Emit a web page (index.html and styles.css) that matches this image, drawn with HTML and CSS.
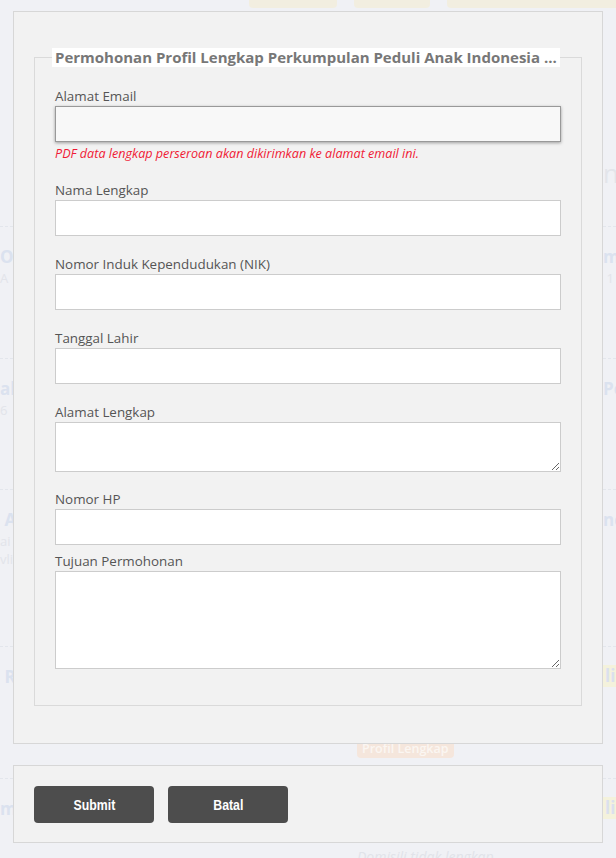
FILE: index.html
```html
<!DOCTYPE html>
<html lang="id">
<head>
<meta charset="utf-8">
<title>Permohonan Profil Lengkap</title>
<link rel="stylesheet" href="styles.css">
</head>
<body>
<div class="bg">
  <div class="tabs">
    <span class="tab tab-a"></span>
    <span class="tab tab-b"></span>
    <span class="tab tab-c"></span>
  </div>
  <div class="bg-head"><span class="bg-head-r">ne</span></div>
  <div class="bg-row r1">
    <div class="c-left"><div class="t">Organisasi</div><div class="s">A</div></div>
    <div class="c-mid"></div>
    <div class="c-right"><div class="t">m</div><div class="s">&nbsp;1</div></div>
  </div>
  <div class="bg-row r2">
    <div class="c-left"><div class="t">ali</div><div class="s">6</div></div>
    <div class="c-mid"></div>
    <div class="c-right"><div class="t">Pe</div></div>
  </div>
  <div class="bg-row r3">
    <div class="c-left"><div class="t">&nbsp;A</div><div class="s">ai 2</div><div class="s">vli</div></div>
    <div class="c-mid"></div>
    <div class="c-right"><div class="t">nc</div></div>
  </div>
  <div class="bg-row r4">
    <div class="c-left"><div class="t">&nbsp;R</div></div>
    <div class="c-mid"><span class="badge">Profil Lengkap</span></div>
    <div class="c-right"><span class="ybtn">li</span></div>
  </div>
  <div class="bg-row r5">
    <div class="c-left"><div class="t">mp</div></div>
    <div class="c-mid"><span class="note">Domisili tidak lengkap</span></div>
    <div class="c-right"><span class="ybtn">li</span></div>
  </div>
</div>

<div class="modal">
  <div class="panel panel-form">
    <fieldset class="fs">
      <legend class="legend">Permohonan Profil Lengkap Perkumpulan Peduli Anak Indonesia ...</legend>
      <div class="group">
        <label class="label">Alamat Email</label>
        <input class="field field-focus" type="text">
        <div class="hint">PDF data lengkap perseroan akan dikirimkan ke alamat email ini.</div>
      </div>
      <div class="group">
        <label class="label">Nama Lengkap</label>
        <input class="field" type="text">
      </div>
      <div class="group">
        <label class="label">Nomor Induk Kependudukan (NIK)</label>
        <input class="field" type="text">
      </div>
      <div class="group">
        <label class="label">Tanggal Lahir</label>
        <input class="field" type="text">
      </div>
      <div class="group group-area">
        <label class="label">Alamat Lengkap</label>
        <textarea class="field area-s"></textarea>
      </div>
      <div class="group group-tight">
        <label class="label">Nomor HP</label>
        <input class="field" type="text">
      </div>
      <div class="group group-last">
        <label class="label">Tujuan Permohonan</label>
        <textarea class="field area-l"></textarea>
      </div>
    </fieldset>
  </div>
  <div class="panel panel-actions">
    <button class="btn" type="button"><span class="btn-text">Submit</span></button>
    <button class="btn" type="button"><span class="btn-text">Batal</span></button>
  </div>
</div>
</body>
</html>
```

FILE: styles.css
```css
* { box-sizing: border-box; }
html, body { margin: 0; padding: 0; }
body {
  background: #f0f1f5;
  font-family: "Open Sans", "Noto Sans", sans-serif;
  position: relative;
  width: 616px;
  height: 858px;
  overflow: hidden;
}

/* faded background page */
.bg { width: 616px; }
.tabs { display: flex; height: 8px; padding-left: 249px; gap: 17px; }
.tab { display: block; background: #f2eee0; border-radius: 0 0 4px 4px; }
.tab-a { width: 88px; }
.tab-b { width: 76px; }
.tab-c { flex: 1; border-radius: 0 0 0 4px; }
.bg-head { height: 219px; display: flex; justify-content: flex-end; align-items: flex-start; padding-top: 150px; border-bottom: 1px dashed #e3e6ec; }
.bg-head-r { font-size: 26px; color: #e3e5ea; width: 13px; overflow: hidden; line-height: 30px; }
.bg-row { display: flex; border-bottom: 1px dashed #e3e6ec; }
.r1 { height: 132px; }
.r2 { height: 131px; }
.r3 { height: 157px; }
.r4 { height: 132px; }
.r5 { height: 120px; }
.c-left { width: 357px; padding-top: 18px; white-space: nowrap; overflow: hidden; }
.c-mid { width: 246px; padding-top: 89px; }
.c-right { flex: 1; padding-top: 18px; white-space: nowrap; overflow: hidden; }
.t { font-weight: 700; font-size: 17px; line-height: 24px; color: #dbe2ef; }
.s { font-size: 13px; line-height: 18px; color: #e2e4ea; }
.badge { display: inline-block; background: #f5e6dc; color: #fbf6f2; font-size: 12.5px; font-weight: 600; line-height: 18px; padding: 0 5px; border-radius: 4px; margin-top: -2px; }
.note { font-style: italic; font-size: 14px; color: #e1e3e9; line-height: 18px; }
.r5 .c-mid { padding-top: 66px; }
.ybtn { display: inline-block; background: #f4f2dc; color: #dbe0ee; font-weight: 700; font-size: 17px; line-height: 22px; padding: 0 2px; margin-top: -2px; }

/* modal lying over the page */
.modal {
  position: absolute;
  top: 0; left: 0; right: 0;
  padding: 11px 13px 0;
  display: flex;
  flex-direction: column;
  gap: 21px;
}
.panel {
  background: #f2f2f2;
  border: 1px solid #d7d7d7;
}
.panel-form { padding: 36px 20px 37px; }
.fs {
  margin: 0;
  border: 1px solid #dadada;
  padding: 19px 20px 36px;
  min-width: 0;
}
.legend {
  margin-left: -3px;
  padding: 0 3px;
  background: #ffffff;
  color: #777777;
  font-weight: 700;
  font-size: 15px;
  line-height: 19px;
  white-space: nowrap;
}
.group { display: flex; flex-direction: column; margin-bottom: 18px; }
.group-area { margin-bottom: 17px; }
.group-tight { margin-bottom: 6px; }
.group-last { margin-bottom: 0; }
.label { font-size: 13.4px; line-height: 20px; color: #555555; }
.field {
  display: block;
  width: 100%;
  height: 36px;
  margin: 0;
  border: 1px solid #cccccc;
  background: #ffffff;
  font-family: inherit;
  font-size: 14px;
  padding: 4px 8px;
  outline: none;
}
.field-focus {
  background: #f8f8f8;
  border-color: #999999;
  box-shadow: 0 1px 3px rgba(0,0,0,0.35);
}
.area-s { height: 50px; resize: vertical; }
.area-l { height: 98px; resize: vertical; }
.hint {
  margin-top: 3px;
  font-size: 12.6px;
  line-height: 17px;
  font-style: italic;
  color: #f01a35;
}
.panel-actions {
  padding: 20px 20px 19px;
  display: flex;
  gap: 14px;
}
.btn {
  width: 120px;
  height: 37px;
  border: 0;
  border-radius: 4px;
  background: #4d4d4d;
  color: #ffffff;
  font-family: "Liberation Sans", Arial, sans-serif;
  font-weight: 700;
  font-size: 15px;
  padding: 0;
}
.btn-text { display: inline-block; transform: scaleX(0.82); }
```
